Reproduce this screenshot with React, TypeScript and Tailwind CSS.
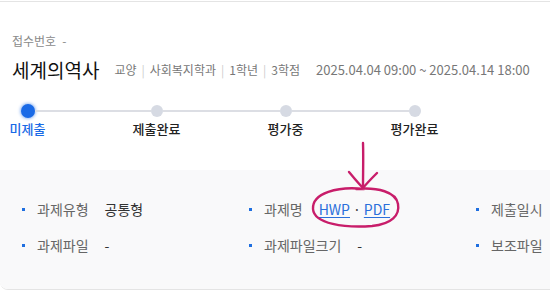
import React from 'react';

const steps = ['미제출', '제출완료', '평가중', '평가완료'];

const Bullet = () => <span className="block w-[3px] h-[3px] bg-[#1f6fe0] shrink-0" />;

const InfoItem = ({ label, children }: { label: string; children?: React.ReactNode }) => (
  <div className="flex items-center h-[20px]">
    <Bullet />
    <span className="ml-3 text-[14px] text-[#666]">{label}</span>
    {children !== undefined && <span className="ml-4 text-[14px] text-[#333]">{children}</span>}
  </div>
);

export default function App() {
  return (
    <div
      className="relative w-[550px] h-[293px] bg-white overflow-hidden pt-px"
      style={{ fontFamily: '"Noto Sans CJK KR", "Noto Sans", sans-serif' }}
    >
      <div className="border-t border-b border-[#e4e4e4] rounded-bl-lg h-[289px] flex flex-col">
        <div className="px-3 pt-[30px] h-[168px]">
          <div className="flex items-center text-[12px] text-[#8a8a8a] h-[18px]">
            접수번호<span className="ml-[6px]">-</span>
          </div>

          <div className="flex items-center mt-[8px] h-[24px] whitespace-nowrap">
            <h2 className="text-[19px] text-[#111]">세계의역사</h2>
            <div className="ml-[15px] flex items-center text-[12px] text-[#777]">
              <span>교양</span>
              <span className="mx-[5px] text-[#ccc]">|</span>
              <span>사회복지학과</span>
              <span className="mx-[5px] text-[#ccc]">|</span>
              <span>1학년</span>
              <span className="mx-[5px] text-[#ccc]">|</span>
              <span>3학점</span>
            </div>
            <span className="ml-[16px] text-[13px] text-[#777]">2025.04.04 09:00 ~ 2025.04.14 18:00</span>
          </div>

          <div className="-ml-[49px] mt-[21px] flex">
            {steps.map((s, i) => (
              <div key={s} className="w-[129px] flex flex-col items-center">
                <div className="w-full flex items-center h-[16px]">
                  <span className={`flex-1 h-[2px] ${i === 0 ? 'bg-transparent' : 'bg-[#dcdee4]'}`} />
                  {i === 0 ? (
                    <span className="w-[14px] h-[14px] rounded-full bg-[#1a6ae6] shadow-[0_0_3px_1px_rgba(26,106,230,0.45)]" />
                  ) : (
                    <span className="w-[12px] h-[12px] rounded-full bg-[#d6dae3]" />
                  )}
                  <span className={`flex-1 h-[2px] ${i === steps.length - 1 ? 'bg-transparent' : 'bg-[#dcdee4]'}`} />
                </div>
                <span
                  className={`mt-0 text-[13px] font-medium whitespace-nowrap ${
                    i === 0 ? 'text-[#1a6ae6]' : 'text-[#222]'
                  }`}
                >
                  {s}
                </span>
              </div>
            ))}
          </div>
        </div>

        <div className="flex-1 bg-[#f9f9fa] px-[22px] pt-[29px] rounded-bl-lg">
          <div className="grid grid-cols-[227px_227px_227px] gap-y-[16px] whitespace-nowrap">
            <InfoItem label="과제유형">공통형</InfoItem>
            <InfoItem label="과제명">
              <span className="text-[#2a6fdb]">
                <a className="underline underline-offset-2">HWP</a>
                <span className="mx-[3px] text-[#444]">·</span>
                <a className="underline underline-offset-2">PDF</a>
              </span>
            </InfoItem>
            <InfoItem label="제출일시" />
            <InfoItem label="과제파일">-</InfoItem>
            <InfoItem label="과제파일크기">-</InfoItem>
            <InfoItem label="보조파일" />
          </div>
        </div>
      </div>

      {/* hand-drawn annotation */}
      <svg className="absolute left-0 top-0 pointer-events-none" width="550" height="293" viewBox="0 0 550 293">
        <g fill="none" stroke="#c81d6a" strokeWidth="2.4" strokeLinecap="round" strokeLinejoin="round">
          <path d="M363 143 C363.5 158 363 172 363 188" />
          <path d="M349 172 C354 178 358 183 363 188 C367 183 372 178 377 173" />
          <path d="M364 189 C338 186 312 193 313 209 C314 224 345 228 372 226 C392 224 400 215 398 204 C396 192 378 187 356 189" />
        </g>
      </svg>
    </div>
  );
}
